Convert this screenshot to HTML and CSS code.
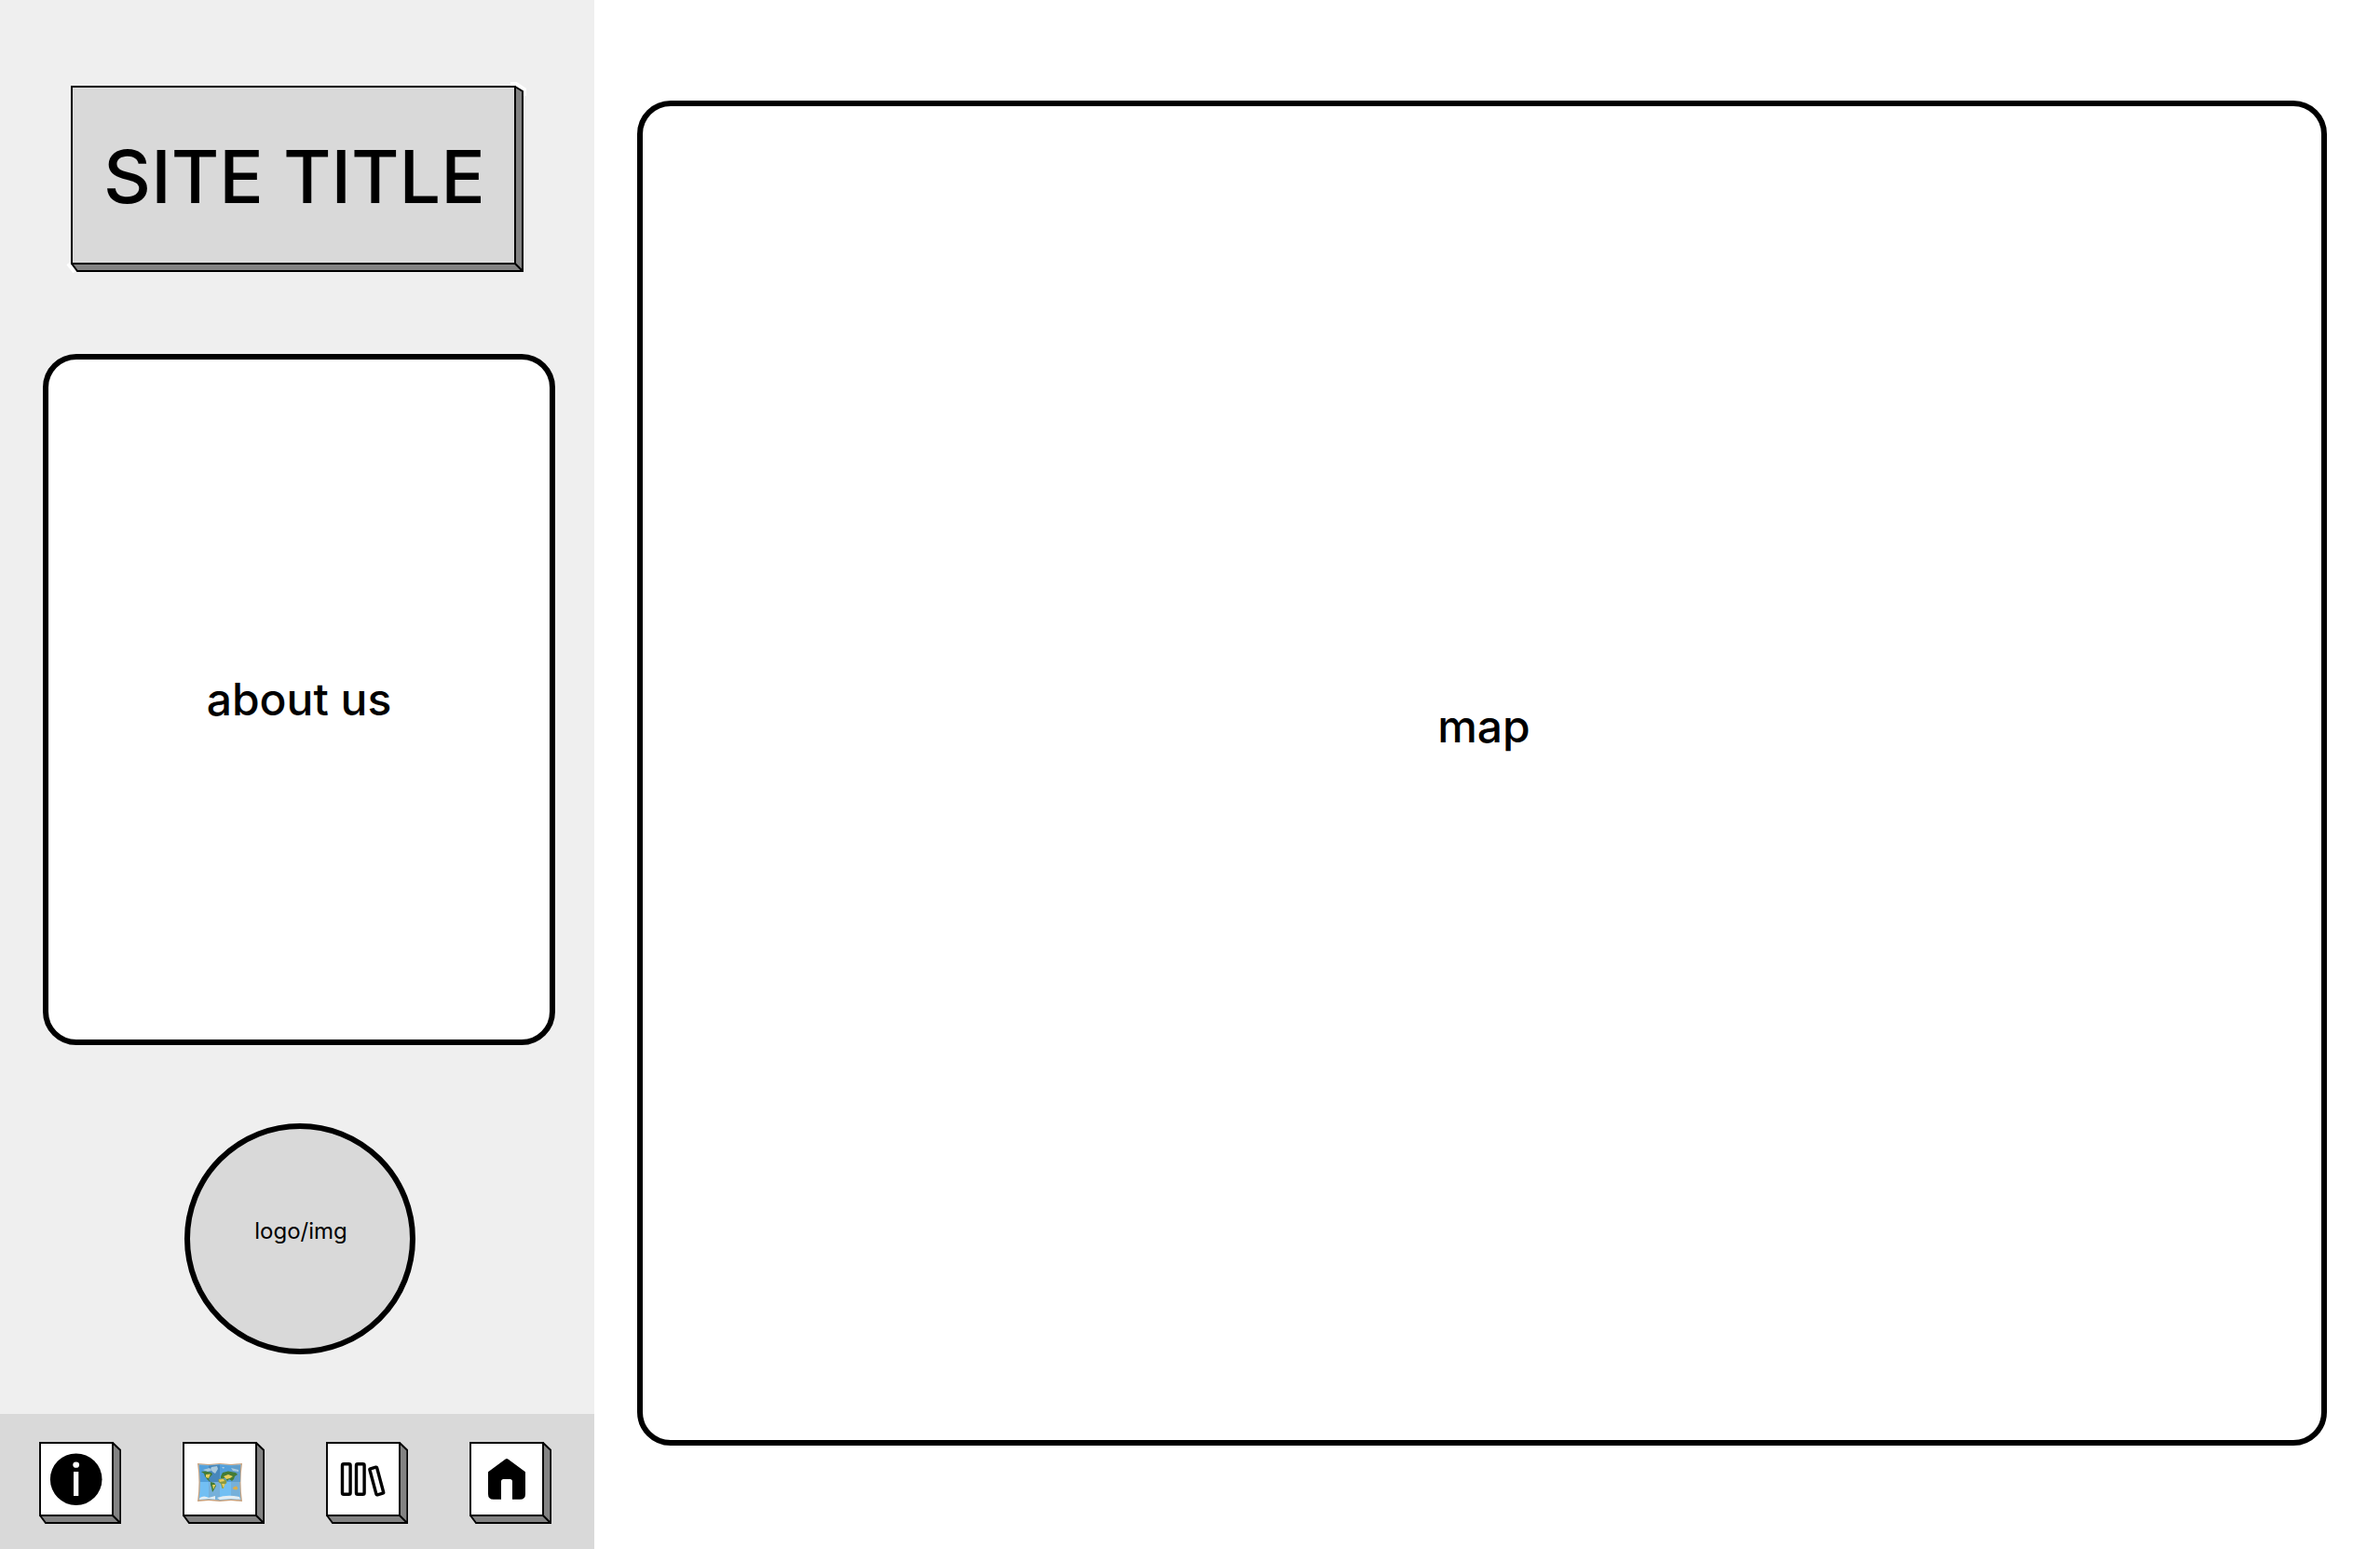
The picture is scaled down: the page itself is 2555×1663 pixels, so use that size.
FILE: index.html
```html
<!DOCTYPE html>
<html lang="en">
<head>
<meta charset="utf-8">
<meta name="viewport" content="width=device-width, initial-scale=1">
<title>Site title</title>
<link rel="stylesheet" href="styles.css">
</head>
<body>
<svg class="defs" aria-hidden="true">
  <symbol id="block" viewBox="0 0 88 88">
    <path d="M79 1L87.3 9V87H7L1 79Z" fill="#838383"/>
    <path d="M1 1H79V79H1Z" fill="#fff"/>
    <path d="M1 1H79V79H1ZM79 1L87.3 9V87H7L1 79M79 79L87 87" fill="none" stroke="#000" stroke-width="1.9"/>
  </symbol>
</svg>
<div class="page">
  <aside class="sidebar">
    <div class="sidebar-body">
      <header class="title-block">
        <svg class="title-shape" viewBox="0 0 486 200" aria-hidden="true">
          <path d="M472 -2H478L487 4V11M-3 191L4 200" fill="none" stroke="#fff" stroke-width="4"/>
          <path d="M477 1L485 6V199H7L1 191Z" fill="#838383"/>
          <path d="M1 1H477V191H1Z" fill="#d9d9d9"/>
          <path d="M1 1H477V191H1ZM477 1L485 6V199H7L1 191M477 191L485 199" fill="none" stroke="#000" stroke-width="2"/>
        </svg>
        <h1 class="title">SITE TITLE</h1>
      </header>
      <section class="panel about"><h2 class="label">about us</h2></section>
      <div class="logo">logo/img</div>
    </div>
    <nav class="toolbar" aria-label="Main">
      <button class="tool" type="button" aria-label="Information">
        <svg viewBox="0 0 88 88"><use href="#block"/>
          <circle cx="39.7" cy="40.2" r="27.8"/>
          <ellipse cx="39.7" cy="24.7" rx="3.4" ry="3.1" fill="#fff"/>
          <path d="M37 32H42.3V58H37Z" fill="#fff"/>
        </svg>
      </button>
      <button class="tool" type="button" aria-label="Map">
        <svg viewBox="0 0 88 88"><use href="#block"/>
          <path d="M16 23L28 24L40 23L52 24L64 23Q61 43 64 64L52 63L40 64L28 63L16 64Q19 43 16 23Z" fill="#c9a17c"/>
          <path d="M17.5 24.3L28 25L40 24L52 25L62.5 24.3Q60 43 62.5 62.3L52 61.5L40 62.5L28 61.5L17.5 62.3Q20 43 17.5 24.3Z" fill="#72bff3"/>
          <path d="M18 25L28 25.5V43H19ZM40 24.5L52 25.5V43H40Z" fill="#529fda"/>
          <path d="M28 25.5L40 24.5V43H28Z" fill="#4787bb"/>
          <path d="M52 25.5L62 25V43H52Z" fill="#5f9dca"/>
          <path d="M28 43H40V62L28 61ZM52 43H61L62 62L52 61Z" fill="#76b0da"/>
          <path d="M18.5 60Q23 57 28 60L35 58V61.7L28 61L18 62ZM37 60Q48 56 61 59L62 61.8L52 61L40 62Z" fill="#e4edf2"/>
          <path d="M31 27L37 26L38 29L35 34L32 32L30 29ZM22 30L29 28L31 31L26 32ZM42 27L45 27L44 29ZM52 28L60 30V32L54 31Z" fill="#a9c9dd"/>
          <path d="M20 32L25 31.5L31 33L32 35L29 38L28 40L30 43L27 41L24 37L23 34ZM30 43L34 44L36 47L34 51L32 54L31 49L30 46ZM41 37L43 33L49 31.5L57 33L59 35L56 37L55 40L53 42L50 40L48 42L46 39L41 39Z" fill="#447c35"/>
          <path d="M38.5 40L43 39L46.5 41L47.5 44L45 46L44 50L42.5 50L41 45L38.5 43Z" fill="#8c9b41"/>
          <path d="M25 35L30 34.5L28 39L25 38ZM32 46L35.5 46L33 51ZM44 37L49 35L54 37L51 39L47 40ZM39 40.5L44 40L45 42L40 43ZM42 45L45.5 45L44 50Z" fill="#e6cd5d"/>
          <path d="M54 49L56 48L58 47.5L59.5 50L58 51.5L54.5 51Z" fill="#dcae4c"/>
        </svg>
      </button>
      <button class="tool" type="button" aria-label="Library">
        <svg viewBox="0 0 88 88"><use href="#block"/>
          <g fill="none" stroke="#000" stroke-width="3.4">
            <rect x="17.5" y="23.7" width="8.6" height="32.6" rx="1.5"/>
            <rect x="32.5" y="23.7" width="8.6" height="32.6" rx="1.5"/>
            <rect x="50.3" y="27.5" width="8" height="29" rx="1" transform="rotate(-15 54.3 42)"/>
          </g>
        </svg>
      </button>
      <button class="tool" type="button" aria-label="Home">
        <svg viewBox="0 0 88 88"><use href="#block"/>
          <path d="M38.3 18.7Q40 17.3 41.7 18.7L60 32.3V56Q60 61.8 54.3 61.8H46V42.5Q46 40 43.5 40H36.5Q34 40 34 42.5V61.8H25.8Q20 61.8 20 56V32.3Z"/>
        </svg>
      </button>
    </nav>
  </aside>
  <main class="content">
    <section class="panel map"><h2 class="label">map</h2></section>
  </main>
</div>
</body>
</html>
```
FILE: styles.css
```css
* {
  box-sizing: border-box;
}

body {
  margin: 0;
  background: #fff;
  color: #000;
  font-family: Inter, "Liberation Sans", sans-serif;
}

.defs {
  position: absolute;
  width: 0;
  height: 0;
}

.page {
  display: flex;
  min-height: 100vh;
}

.sidebar {
  display: flex;
  flex: none;
  flex-direction: column;
  width: 638px;
  background: #efefef;
}

.sidebar-body {
  display: flex;
  flex: 1;
  flex-direction: column;
  align-items: center;
  padding: 92px 42px 64px 46px;
}

.title-block {
  position: relative;
  display: flex;
  align-items: center;
  justify-content: center;
  width: 486px;
  height: 200px;
  margin: 0 4px 88px 0;
  padding: 0 6px 6px 0;
}

.title-shape {
  position: absolute;
  inset: 0;
  overflow: visible;
}

.title {
  position: relative;
  margin: 0;
  font-size: 79px;
  font-weight: 500;
  line-height: 96px;
  white-space: nowrap;
}

.panel {
  display: flex;
  align-items: center;
  justify-content: center;
  border: 6px solid #000;
  border-radius: 36px;
  background: #fff;
}

.about {
  flex: 1;
  align-self: stretch;
  margin-bottom: 84px;
}

.label {
  margin: 0;
  font-size: 48px;
  font-weight: 500;
  line-height: 58px;
}

.logo {
  display: flex;
  align-items: center;
  justify-content: center;
  width: 248px;
  height: 248px;
  margin-left: 2px;
  padding: 0 0 16px 2px;
  border: 6px solid #000;
  border-radius: 50%;
  background: #d9d9d9;
  font-size: 24px;
  line-height: 30px;
}

.toolbar {
  display: flex;
  justify-content: space-between;
  padding: 30px 46px 27px 42px;
  background: #d9d9d9;
}

.tool {
  width: 88px;
  height: 88px;
  padding: 0;
  border: 0;
  background: none;
  cursor: pointer;
}

.tool svg {
  display: block;
  width: 88px;
  height: 88px;
}

.content {
  display: flex;
  flex: 1;
  padding: 108px 57px 111px 46px;
}

.map {
  flex: 1;
  padding: 0 0 100px 4px;
}
```
